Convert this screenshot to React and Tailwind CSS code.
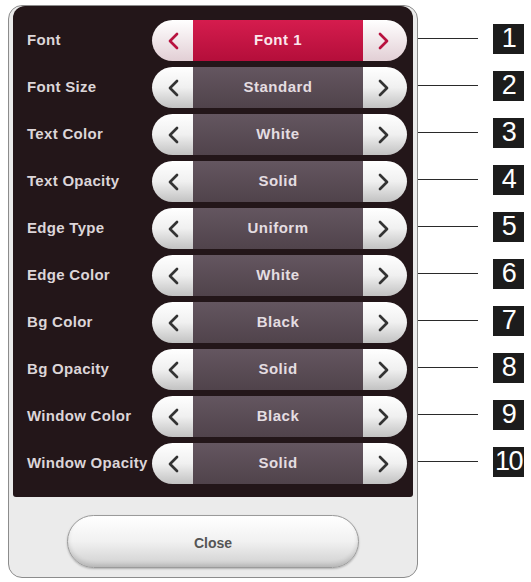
import React from "react";

const rows = [
  { label: "Font", value: "Font 1", active: true },
  { label: "Font Size", value: "Standard" },
  { label: "Text Color", value: "White" },
  { label: "Text Opacity", value: "Solid" },
  { label: "Edge Type", value: "Uniform" },
  { label: "Edge Color", value: "White" },
  { label: "Bg Color", value: "Black" },
  { label: "Bg Opacity", value: "Solid" },
  { label: "Window Color", value: "Black" },
  { label: "Window Opacity", value: "Solid" },
];

function Chevron({ dir, color }) {
  const pts = dir === "left" ? "10,2 3,9 10,16" : "3,2 10,9 3,16";
  return (
    <svg width="13" height="18" viewBox="0 0 13 18" fill="none">
      <polyline
        points={pts}
        stroke={color}
        strokeWidth="2.7"
        strokeLinecap="round"
        strokeLinejoin="round"
      />
    </svg>
  );
}

function OptionRow({ label, value, active }) {
  const chevColor = active ? "#b8123f" : "#333";
  return (
    <div className="flex items-center h-[41px]">
      <div className="w-[125px] text-[15px] font-bold tracking-[0.3px] text-[#dcd5d8]">
        {label}
      </div>
      <div className="flex w-[255px] h-[41px]">
        <div
          className={
            "w-[41px] rounded-l-full flex items-center justify-center pl-[2px] bg-linear-to-b " +
            (active ? "from-white to-[#e2cfd5]" : "from-white via-[#f0f0f0] to-[#c2c2c2]")
          }
        >
          <Chevron dir="left" color={chevColor} />
        </div>
        <div
          className={
            "flex-1 flex items-center justify-center text-[15px] font-bold tracking-[0.5px] bg-linear-to-b " +
            (active
              ? "from-[#d51c4e] to-[#b40e3a] text-[#fbe6ec]"
              : "from-[#645660] to-[#50434b] text-[#e4dde1]")
          }
        >
          {value}
        </div>
        <div
          className={
            "w-[44px] rounded-r-full flex items-center justify-center pr-[3px] bg-linear-to-b " +
            (active ? "from-white to-[#e2cfd5]" : "from-white via-[#f0f0f0] to-[#c2c2c2]")
          }
        >
          <Chevron dir="right" color={chevColor} />
        </div>
      </div>
    </div>
  );
}

export default function App() {
  return (
    <div
      className="w-[531px] h-[582px] bg-white flex items-start pl-[8px] pt-[5px]"
      style={{ fontFamily: '"Liberation Sans", Arial, sans-serif' }}
    >
      <div className="w-[410px] h-[573px] border border-[#8c8c8c] rounded-[14px] bg-[#ebebeb] flex flex-col overflow-hidden">
        <div className="mx-[4px] h-[491px] bg-[#231619] rounded-t-[12px] rounded-b-[3px] flex flex-col gap-[6px] pt-[14px] pl-[14px] pr-[6px]">
          {rows.map((r) => (
            <OptionRow key={r.label} {...r} />
          ))}
        </div>
        <div className="flex-1 flex justify-center pt-[18px]">
          <button className="w-[292px] h-[53px] rounded-full border border-[#9a9a9a] bg-linear-to-b from-white via-[#f1f1f1] to-[#cfcfcf] shadow-[inset_0_-3px_4px_rgba(0,0,0,0.12),0_1px_2px_rgba(0,0,0,0.25)] text-[14px] font-bold text-[#555] pt-[4px]">
            Close
          </button>
        </div>
      </div>
      <div className="flex flex-col gap-[6px] pt-[15px]">
        {rows.map((r, i) => (
          <div key={r.label} className="h-[41px] flex items-center pb-[4px]">
            <div className="w-[60px] h-[1.5px] bg-[#2a2a2a]" />
            <div className="ml-[15px] w-[31px] h-[30px] bg-[#1c1c1c] flex items-center justify-center text-white text-[27px] font-normal tracking-[-1.5px] leading-none">
              {i + 1}
            </div>
          </div>
        ))}
      </div>
    </div>
  );
}
